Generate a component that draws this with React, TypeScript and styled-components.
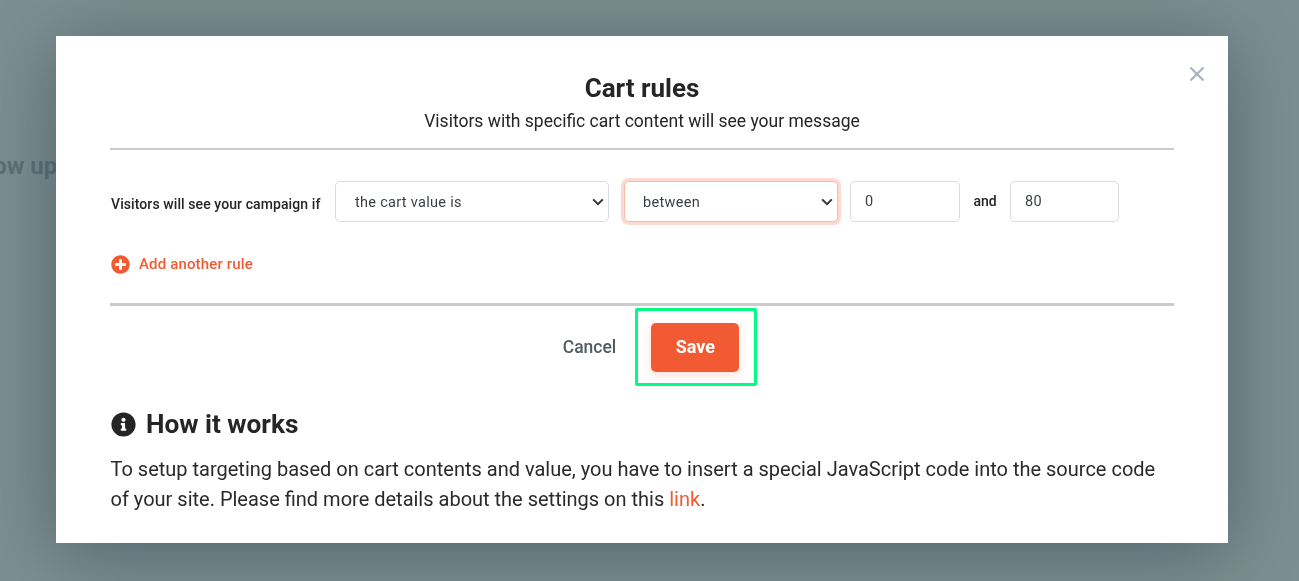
import React from "react";
import styled, { createGlobalStyle } from "styled-components";
import { FaInfoCircle, FaPlusCircle } from "react-icons/fa";

const chevron =
  "url(\"data:image/svg+xml,%3Csvg xmlns='http://www.w3.org/2000/svg' width='12' height='8' viewBox='0 0 12 8'%3E%3Cpath d='M1.2 1.4 6 6.2l4.8-4.8' fill='none' stroke='%23303438' stroke-width='2'/%3E%3C/svg%3E\")";

const Global = createGlobalStyle`
  html, body { margin: 0; padding: 0; height: 100%; overflow: hidden; }
  body { font-family: Roboto, "Liberation Sans", sans-serif; background: #7c8f92; }
`;

const Page = styled.div`
  height: 581px;
  overflow: hidden;
  background: #7c8f92;
  padding-top: 150px;
  box-sizing: border-box;
`;

const BehindText = styled.div`
  margin-left: -35px;
  font-size: 24px;
  line-height: 32px;
  font-weight: 700;
  color: #5c7076;
`;

const Backdrop = styled.div`
  position: fixed;
  inset: 0;
  display: flex;
  justify-content: center;
  align-items: flex-start;
  padding: 36px 15px 0 0;
  overflow: hidden;
`;

const Modal = styled.div`
  position: relative;
  width: 1172px;
  height: 507px;
  box-sizing: border-box;
  padding: 37px 54px 0;
  background: #fff;
  color: #252525;
  box-shadow: 0 10px 70px rgba(48, 66, 74, 0.55);
`;

const Close = styled.button`
  position: absolute;
  top: 30px;
  right: 23px;
  width: 16px;
  height: 16px;
  padding: 0;
  border: 0;
  background: none;
  display: flex;
  color: #a9b2c0;
`;

const Header = styled.header`
  display: flex;
  flex-direction: column;
  align-items: center;
  height: 75px;
`;

const Title = styled.h1`
  margin: 0;
  font-size: 26px;
  line-height: 30px;
  font-weight: 700;
`;

const Subtitle = styled.p`
  margin: 4px 0 0;
  font-size: 17.5px;
  line-height: 28px;
  font-weight: 400;
`;

const Rule = styled.hr<{ $thick?: boolean }>`
  margin: 0;
  border: 0;
  height: ${(p) => (p.$thick ? 3 : 2)}px;
  background: #cbcbcb;
`;

const RuleRow = styled.div`
  display: flex;
  align-items: center;
  height: 41px;
  margin-top: 31px;
`;

const Label = styled.label`
  width: 224px;
  margin-left: 1px;
  flex: none;
  font-size: 14px;
  letter-spacing: 0.09px;
  font-weight: 500;
  padding-top: 5px;
`;

const Select = styled.select<{ $w: number; $focus?: boolean; $ml?: number }>`
  width: ${(p) => p.$w}px;
  height: 41px;
  margin-left: ${(p) => p.$ml ?? 0}px;
  flex: none;
  box-sizing: border-box;
  padding: 1px 0 0 ${(p) => (p.$focus ? 18 : 19)}px;
  appearance: none;
  background: #fff ${chevron} no-repeat right 4px center;
  border: 1px solid ${(p) => (p.$focus ? "#fbb9a6" : "#d9dce3")};
  border-radius: 5px;
  box-shadow: ${(p) => (p.$focus ? "0 0 0 3px #fdd9cf" : "none")};
  font: 400 14.5px Roboto, sans-serif;
  letter-spacing: 0.3px;
  color: #3a3f45;
  outline: none;
`;

const NumberInput = styled.input<{ $w: number; $ml: number }>`
  width: ${(p) => p.$w}px;
  height: 41px;
  margin-left: ${(p) => p.$ml}px;
  flex: none;
  box-sizing: border-box;
  padding: 0 14px;
  background: #fff;
  border: 1px solid #d9dce3;
  border-radius: 5px;
  font: 400 14.5px Roboto, sans-serif;
  letter-spacing: 0.3px;
  color: #3a3f45;
  outline: none;
`;

const And = styled.span`
  width: 50px;
  flex: none;
  text-align: center;
  font-size: 14px;
  font-weight: 500;
  padding-bottom: 2px;
`;

const AddRule = styled.button`
  display: flex;
  align-items: center;
  gap: 9px;
  height: 20px;
  margin: 32px 0 29px 1px;
  padding: 0;
  border: 0;
  background: none;
  color: #f15a33;
  font: 500 15px Roboto, sans-serif;
  letter-spacing: 0.15px;
`;

const Actions = styled.div`
  display: flex;
  justify-content: center;
  align-items: center;
  margin-top: 2px;
  padding-left: 36px;
`;

const Cancel = styled.button`
  margin-right: 19px;
  padding: 0;
  border: 0;
  background: none;
  color: #515c62;
  font: 500 17.5px Roboto, sans-serif;
`;

const Highlight = styled.div`
  display: flex;
  padding: 12px 15px 11px 13px;
  border: 3px solid #00fb85;
  border-radius: 2px;
`;

const Save = styled.button`
  width: 88px;
  height: 49px;
  padding: 0 0 2px;
  border: 0;
  border-radius: 5px;
  background: #f15a33;
  box-shadow: 0 3px 10px rgba(241, 90, 51, 0.2);
  color: #fff;
  font: 700 18px Roboto, sans-serif;
`;

const HowHeading = styled.h2`
  display: flex;
  align-items: center;
  gap: 10px;
  height: 34px;
  margin: 21px 0 0 1px;
  font-size: 26.2px;
  font-weight: 700;
  color: #252525;
`;

const Body = styled.p`
  margin: 13px 0 0;
  padding-left: 0.5px;
  font-size: 20px;
  line-height: 30px;
  font-weight: 400;
  color: #2a2a2a;
`;

const Link = styled.a`
  color: #f15a33;
  text-decoration: none;
`;

export default function App() {
  return (
    <Page>
      <Global />
      <BehindText>Show up</BehindText>
      <Backdrop>
        <Modal>
          <Close aria-label="Close">
            <svg width="16" height="16" viewBox="0 0 16 16" fill="none" stroke="currentColor" strokeWidth="2.2">
              <path d="M1.5 1.5l13 13M14.5 1.5l-13 13" />
            </svg>
          </Close>
          <Header>
            <Title>Cart rules</Title>
            <Subtitle>Visitors with specific cart content will see your message</Subtitle>
          </Header>
          <Rule />
          <RuleRow>
            <Label>Visitors will see your campaign if</Label>
            <Select $w={274} defaultValue="value">
              <option value="value">the cart value is</option>
            </Select>
            <Select $w={214} $ml={15} $focus defaultValue="between">
              <option value="between">between</option>
            </Select>
            <NumberInput $w={110} $ml={12} defaultValue="0" />
            <And>and</And>
            <NumberInput $w={109} $ml={0} defaultValue="80" />
          </RuleRow>
          <AddRule>
            <FaPlusCircle size={19} />
            Add another rule
          </AddRule>
          <Rule $thick />
          <Actions>
            <Cancel>Cancel</Cancel>
            <Highlight>
              <Save>Save</Save>
            </Highlight>
          </Actions>
          <HowHeading>
            <FaInfoCircle size={25} />
            How it works
          </HowHeading>
          <Body>
            To setup targeting based on cart contents and value, you have to insert a special JavaScript code into the source code of your site. Please find more details about the settings on this <Link href="#">link</Link>.
          </Body>
        </Modal>
      </Backdrop>
    </Page>
  );
}
